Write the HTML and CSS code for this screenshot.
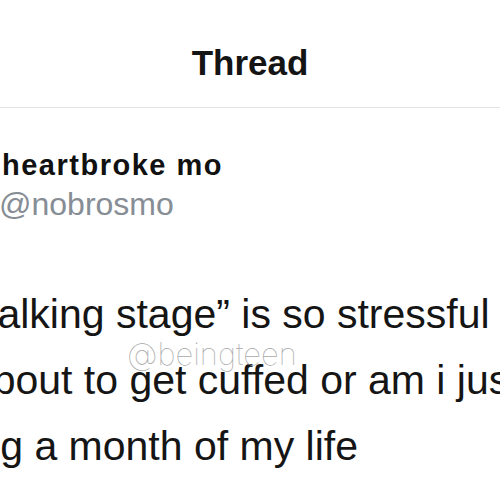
FILE: index.html
```html
<!DOCTYPE html>
<html lang="en">
<head>
<meta charset="utf-8">
<title>Thread</title>
<link rel="stylesheet" href="styles.css">
</head>
<body>
<div class="screen">
  <header class="top-bar">
    <h1 class="title">Thread</h1>
  </header>
  <section class="tweet">
    <div class="author">
      <div class="name">heartbroke mo</div>
      <div class="handle">@nobrosmo</div>
    </div>
    <div class="tweet-text">
      <div class="line line-1">the “talking stage” is so stressful like</div>
      <div class="line line-2">am i about to get cuffed or am i just</div>
      <div class="line line-3">wasting a month of my life</div>
      <span class="watermark">@beingteen</span>
    </div>
  </section>
</div>
</body>
</html>
```
FILE: styles.css
```css
html, body {
  margin: 0;
  padding: 0;
  background: #ffffff;
}

.screen {
  width: 500px;
  height: 500px;
  overflow: hidden;
  font-family: "Liberation Sans", Arial, sans-serif;
  color: #121212;
}

.top-bar {
  padding: 43px 0 24px;
  border-bottom: 1px solid #e4e4e4;
}

.title {
  margin: 0;
  font-size: 35px;
  line-height: 40px;
  font-weight: 700;
  text-align: center;
  color: #141414;
}

.tweet {
  padding-top: 40px;
}

.name {
  padding-left: 2px;
  font-size: 29px;
  line-height: 34px;
  font-weight: 700;
  letter-spacing: 1.5px;
  color: #111111;
}

.handle {
  margin-top: 2px;
  margin-left: -1px;
  font-size: 32px;
  line-height: 40px;
  color: #868d95;
}

.tweet-text {
  position: relative;
  margin-top: 57px;
}

.line {
  font-size: 41px;
  line-height: 66px;
  white-space: nowrap;
  color: #151515;
}

.line-1 { margin-left: -96px; }
.line-2 { margin-left: -119px; }
.line-3 { margin-left: -116px; }

.watermark {
  position: absolute;
  left: 127px;
  top: 56px;
  font-family: "Inter", "Lato", sans-serif;
  font-weight: 100;
  font-size: 31px;
  line-height: 34px;
  color: #a8a8a8;
  letter-spacing: 0;
}
```
